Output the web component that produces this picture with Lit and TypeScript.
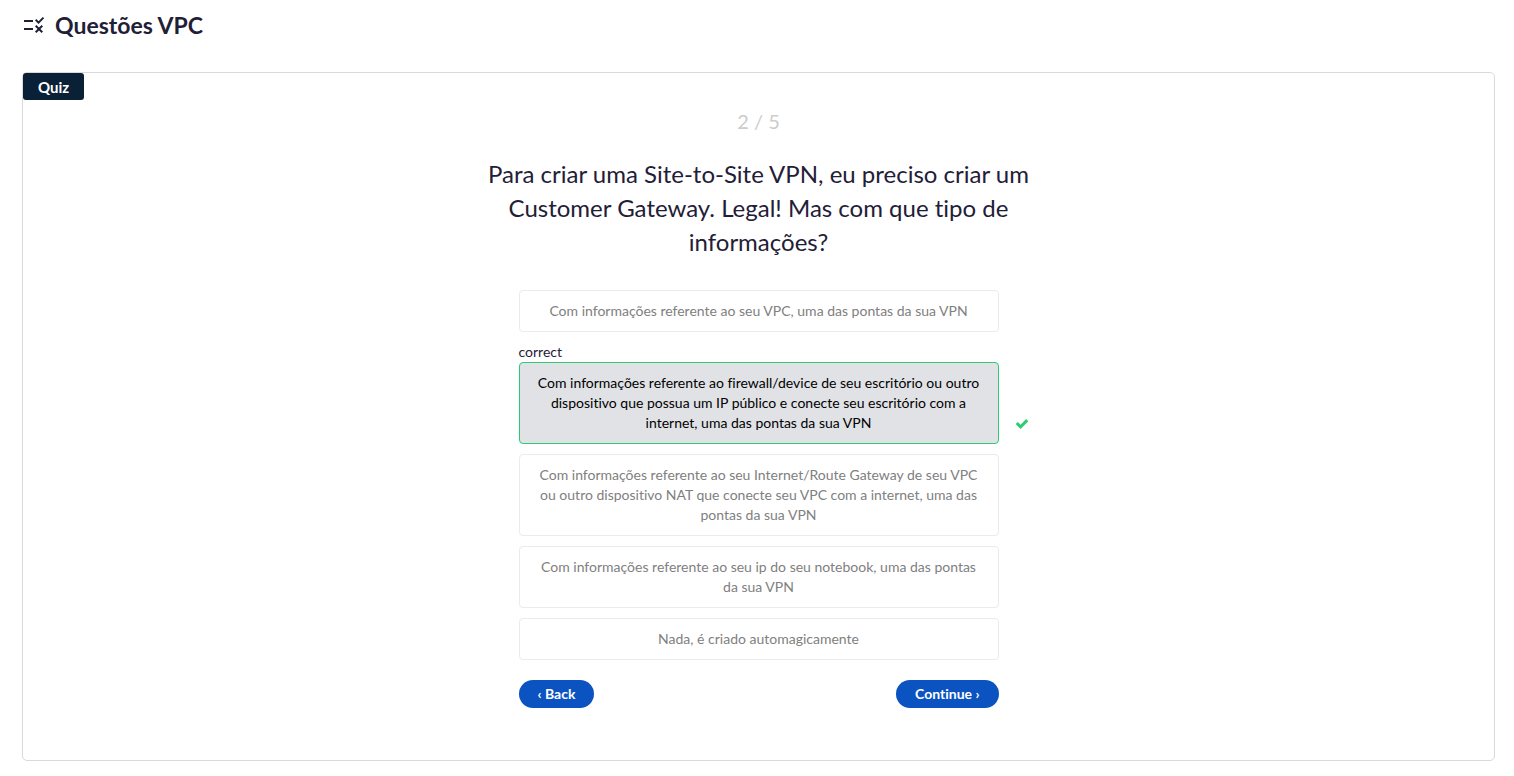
import { LitElement, html, css } from "lit";
import { customElement, state } from "lit/decorators.js";
import { classMap } from "lit/directives/class-map.js";

interface Answer {
  text: string;
  correct?: boolean;
}

const ANSWERS: Answer[] = [
  { text: "Com informações referente ao seu VPC, uma das pontas da sua VPN" },
  {
    text: "Com informações referente ao firewall/device de seu escritório ou outro dispositivo que possua um IP público e conecte seu escritório com a internet, uma das pontas da sua VPN",
    correct: true,
  },
  { text: "Com informações referente ao seu Internet/Route Gateway de seu VPC ou outro dispositivo NAT que conecte seu VPC com a internet, uma das pontas da sua VPN" },
  { text: "Com informações referente ao seu ip do seu notebook, uma das pontas da sua VPN" },
  { text: "Nada, é criado automagicamente" },
];

@customElement("app-root")
export class AppRoot extends LitElement {
  @state() private selected = 1;

  static styles = css`
    :host {
      display: flex;
      flex-direction: column;
      box-sizing: border-box;
      min-height: 100vh;
      background: #fff;
      color: #1f2037;
      font-family: Lato, "Liberation Sans", sans-serif;
      font-size: 14px;
      line-height: 20px;
      font-variant-ligatures: none;
    }
    *, *::before, *::after { box-sizing: border-box; }
    .header {
      display: flex;
      align-items: center;
      gap: 9px;
      height: 50px;
      padding: 0 22px;
    }
    .header svg { width: 24px; height: 24px; }
    .title { margin: 0; font-size: 23px; line-height: 32px; font-weight: 700; }
    .card {
      position: relative;
      flex: 1;
      margin: 22px 19px 15px 22px;
      padding: 32px 20px 52px;
      border: 1px solid #d9d9d9;
      border-radius: 5px;
    }
    .tag {
      position: absolute;
      top: 0;
      left: 0;
      padding: 1px 15px 0;
      border-radius: 3px;
      background: #0a2036;
      color: #fff;
      font-size: 15px;
      line-height: 26px;
      font-weight: 700;
    }
    .progress {
      margin: 0 0 20px;
      color: #ccc;
      text-align: center;
      font-size: 20px;
      line-height: 32px;
    }
    .question {
      max-width: 560px;
      margin: 0 auto 31px;
      text-align: center;
      font-size: 24px;
      line-height: 34px;
      font-weight: 400;
    }
    .quiz { max-width: 480px; margin: 0 auto; }
    .answers {
      display: flex;
      flex-direction: column;
      gap: 10px;
      margin: 0;
      padding: 0;
      list-style: none;
    }
    .answer { position: relative; }
    .status { display: block; }
    .option {
      display: block;
      width: 100%;
      padding: 10px 16px;
      border: 1px solid #ebebeb;
      border-radius: 4px;
      background: #fff;
      color: #808080;
      font: inherit;
      font-variant-ligatures: none;
      text-align: center;
      cursor: pointer;
    }
    .option.correct { border-color: #2ecc71; background: #e1e2e6; color: #000; }
    .check { position: absolute; right: -30px; bottom: 13px; width: 14px; height: 14px; }
    .actions { display: flex; justify-content: space-between; margin-top: 20px; }
    .action {
      padding: 0 19px;
      border: 0;
      border-radius: 14px;
      background: #0b53c1;
      color: #fff;
      font: inherit;
      font-variant-ligatures: none;
      font-weight: 700;
      line-height: 28px;
      cursor: pointer;
    }
  `;

  private renderAnswer(answer: Answer, index: number) {
    const marked = answer.correct && this.selected === index;
    return html`<li class="answer">
      ${marked ? html`<span class="status">correct</span>` : ""}
      <button
        type="button"
        class=${classMap({ option: true, correct: !!marked })}
        aria-pressed=${this.selected === index ? "true" : "false"}
        @click=${() => (this.selected = index)}
      >${answer.text}</button>
      ${marked
        ? html`<svg class="check" viewBox="0 0 14 14" fill="#2ecc71" aria-hidden="true">
            <path d="M13.05 4.2c0 .2-.08.39-.22.53L6.11 11.45a.75.75 0 0 1-1.06 0L1.16 7.56a.75.75 0 0 1 0-1.06l1.06-1.06a.75.75 0 0 1 1.06 0l2.3 2.3 5.13-5.13a.75.75 0 0 1 1.06 0l1.06 1.06c.14.14.22.33.22.53z" />
          </svg>`
        : ""}
    </li>`;
  }

  render() {
    return html`
      <header class="header">
        <svg viewBox="0 0 24 24" fill="currentColor" aria-hidden="true">
          <path d="M16.54 11 13 7.46l1.41-1.41 2.12 2.12 4.24-4.24 1.41 1.41L16.54 11zM11 7H2v2h9V7zm10 6.41L19.59 12 17 14.59 14.41 12 13 13.41 15.59 16 13 18.59 14.41 20 17 17.41 19.59 20 21 18.59 18.41 16 21 13.41zM11 15H2v2h9v-2z" />
        </svg>
        <h1 class="title">Questões VPC</h1>
      </header>
      <main class="card">
        <span class="tag">Quiz</span>
        <p class="progress">2 / 5</p>
        <h2 class="question">Para criar uma Site-to-Site VPN, eu preciso criar um Customer Gateway. Legal! Mas com que tipo de informações?</h2>
        <div class="quiz">
          <ul class="answers">${ANSWERS.map((a, i) => this.renderAnswer(a, i))}</ul>
          <div class="actions">
            <button type="button" class="action">‹ Back</button>
            <button type="button" class="action">Continue ›</button>
          </div>
        </div>
      </main>
    `;
  }
}
